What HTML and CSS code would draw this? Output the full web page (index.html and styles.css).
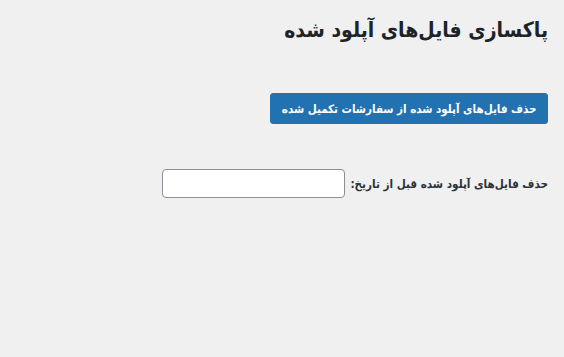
FILE: index.html
```html
<!DOCTYPE html>
<html lang="fa" dir="rtl">
<head>
<meta charset="utf-8">
<link rel="stylesheet" href="styles.css">
</head>
<body>
<div class="wrap">
  <h1 class="title">پاکسازی فایل‌های آپلود شده</h1>
  <div class="actions">
    <button class="btn" type="button">حذف فایل‌های آپلود شده از سفارشات تکمیل شده</button>
  </div>
  <div class="field">
    <label class="label" for="d">حذف فایل‌های آپلود شده قبل از تاریخ:</label>
    <input class="input" id="d" type="text">
  </div>
</div>
</body>
</html>
```

FILE: styles.css
```css
html, body {
  margin: 0;
  padding: 0;
  background: #f0f0f1;
}
body {
  font-family: "DejaVu Sans Condensed", "DejaVu Sans", sans-serif;
  color: #1d2327;
}
.wrap {
  padding: 12px 16px 0 16px;
  display: flex;
  flex-direction: column;
  align-items: flex-start;
}
.title {
  margin: 0;
  font-size: 21px;
  font-weight: 700;
  line-height: 36px;
}
.actions {
  margin-top: 45px;
}
.btn {
  font-family: inherit;
  background: #2271b1;
  color: #fff;
  border: 1px solid #2271b1;
  border-radius: 3px;
  font-size: 11.5px;
  font-weight: 700;
  height: 31px;
  padding: 0 10.5px;
  cursor: pointer;
}
.field {
  margin-top: 45px;
  display: flex;
  align-items: center;
  gap: 5px;
}
.label {
  font-size: 11.6px;
  font-weight: 700;
  color: #2c3338;
}
.input {
  width: 183px;
  height: 29px;
  box-sizing: border-box;
  border: 1px solid #8c8f94;
  border-radius: 4px;
  background: #fff;
  margin: 0;
}
```
